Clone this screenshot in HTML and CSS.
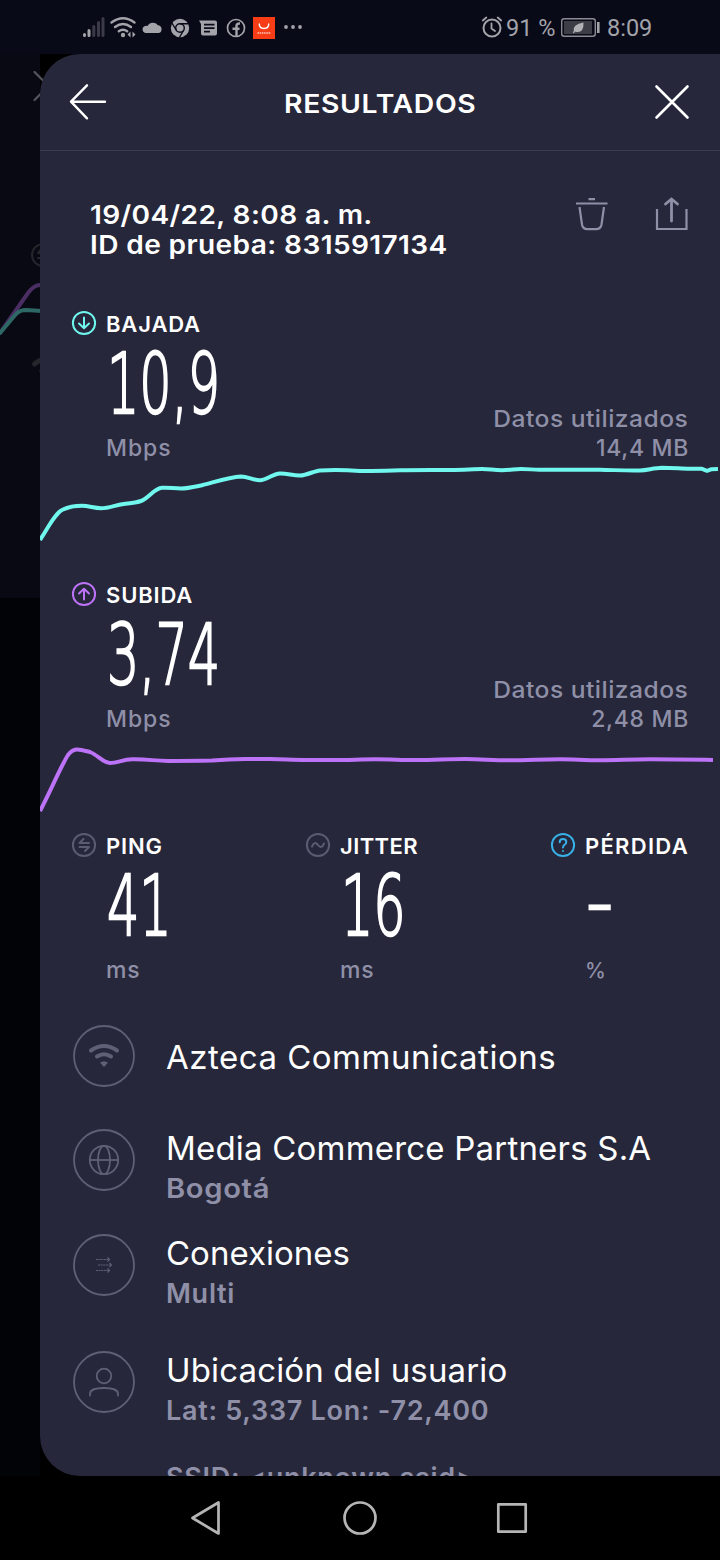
FILE: index.html
```html
<!DOCTYPE html>
<html lang="es">
<head>
<meta charset="utf-8">
<title>Resultados</title>
<link rel="stylesheet" href="styles.css">
</head>
<body>
<div class="screen">
  <header class="status">
    <svg class="status-icons" width="240" height="54" viewBox="70 0 240 54" fill="none">
      <g stroke-width="3" stroke-linecap="round">
        <path stroke="#a3a3aa" d="M84.500 34.500v1M89 30.500v5"/>
        <path stroke="#3a3a48" d="M93.800 26.500v9M98.500 22.500v13M103 18.500v17"/>
      </g>
      <g stroke="#a3a3aa" stroke-width="2.400" stroke-linecap="round">
        <path d="M111.500 22.500q11.500-8.500 23 0M115 27q8-6 16 0M118.800 31.200q4.200-3 8.400 0"/>
      </g>
      <circle cx="123" cy="35" r="2.200" fill="#a3a3aa"/>
      <path fill="#a3a3aa" d="M127.500 34.500l3-3v6zM135.500 34.500l-3-3v6z"/>
      <path fill="#a3a3aa" d="M145.500 33a3.600 3.600 0 0 1-.3-7q1.500-.3 2.300 0a6 6 0 0 1 10.300-.8 4 4 0 0 1 1 7.800z"/>
      <circle cx="180" cy="28" r="9.200" fill="#a3a3aa"/>
      <circle cx="180" cy="28" r="4.300" fill="#a3a3aa" stroke="#090a18" stroke-width="1.400"/>
      <path stroke="#090a18" stroke-width="1.400" d="M180 23.700h8.500M176.200 30l-4.600-7.500M183.800 30l-4.400 7.500"/>
      <path fill="#a3a3aa" d="M199 20.500h16q2 0 2 2v11q0 2-2 2h-12q-2 0-2-2V24z"/>
      <path stroke="#090a18" stroke-width="1.700" d="M204 24.700h10.500M204 28.200h10.500M204 31.700h6"/>
      <circle cx="236" cy="28" r="8.500" stroke="#a3a3aa" stroke-width="1.700"/>
      <path stroke="#a3a3aa" stroke-width="2.400" d="M236.500 36.500V26q0-2.800 3.500-2.500M232.500 28.700h7"/>
      <rect x="253" y="17" width="22" height="22" fill="#f83c16"/>
      <path stroke="#fff" stroke-width="1.400" stroke-linecap="round" d="M259.300 24q0 4.500 4.700 4.500t4.700-4.500"/>
      <path stroke="#ffc8b8" stroke-width="1.600" stroke-dasharray="1.500 .7" d="M257.500 33h13.500"/>
      <g fill="#a3a3aa"><circle cx="286" cy="27" r="1.900"/><circle cx="293" cy="27" r="1.900"/><circle cx="300" cy="27" r="1.900"/></g>
    </svg>
    <svg class="alarm" width="24" height="54" viewBox="480 0 24 54" fill="none" stroke="#a3a3aa" stroke-linecap="round">
      <circle cx="492" cy="28" r="8.500" stroke-width="2"/>
      <path stroke-width="1.800" d="M491.500 23.500v5l3.500 2.500M482.800 20.500l3.500-3M501.200 20.500l-3.500-3"/>
    </svg>
    <span class="percent">91 %</span>
    <svg class="battery" width="42" height="54" viewBox="560 0 42 54" fill="none">
      <rect x="561.700" y="18.700" width="33.600" height="17.600" rx="2.500" stroke="#8a8a92" stroke-width="1.400"/>
      <rect x="564" y="21" width="28" height="13" fill="#3d3d48"/>
      <path stroke="#a3a3aa" stroke-width="2.600" d="M598.300 22v11"/>
      <path fill="#b0b0b5" d="M573 33q.3-1.500.8-2.200-1.300-6.300 9.700-8.300.5 9.500-6 9.600-1.500 0-2.300-.5l-1.200 1.600z"/>
    </svg>
    <span class="clock">8:09</span>
  </header>

  <div class="stage">
    <svg class="behind" width="80" height="1422" viewBox="0 54 80 1422" fill="none">
      <g stroke-linecap="round">
        <path stroke="#55565b" stroke-width="2.200" d="M34.500 72l28 28M34.500 100l28-28"/>
        <circle cx="43" cy="255" r="11" stroke="#25262b" stroke-width="2"/>
        <path stroke="#25262b" stroke-width="2" d="M38 253h10M41 249l-3 4M38 258h10"/>
        <path stroke="#4a2e63" stroke-width="4" d="M0 333L28 293Q34 285 40 285"/>
        <path stroke="#2e6866" stroke-width="4" d="M0 333L16 314Q20 310 26 310L42 311"/>
        <path stroke="#25262b" stroke-width="5" d="M34.500 364q8-6.500 18-6.500M42 371q3-2 8-2"/>
      </g>
    </svg>
    <main class="panel">
      <div class="topbar">
        <svg width="40" height="40" viewBox="68 82 40 40" fill="none" stroke="#fff" stroke-width="2.400" stroke-linecap="round" stroke-linejoin="round"><path d="M105 101.700H71M87 85.300L71 101.700 87 118.300"/></svg>
        <h1 class="title">RESULTADOS</h1>
        <svg width="40" height="40" viewBox="652 82 40 40" fill="none" stroke="#fff" stroke-width="2.600" stroke-linecap="round"><path d="M656.500 86.500l31 31M687.500 86.500l-31 31"/></svg>
      </div>

      <section class="test">
        <div class="test-text"><div class="date">19/04/22, 8:08 a. m.</div><div class="test-id">ID de prueba: 8315917134</div></div>
        <svg width="116" height="38" viewBox="574 196 116 38" fill="none" stroke="#8f90a8" stroke-width="2.200">
          <path d="M576 203.500h31.500M588.500 199.200h6.500M579.500 207l2.500 17.500q.8 4.700 5.500 4.700h8.500q4.700 0 5.500-4.700L604 207"/>
          <path d="M657 209v20h29.500v-20"/><path stroke-width="2.800" stroke-linecap="round" d="M671.500 221V200M665.500 204l6-5 6 5"/>
        </svg>
      </section>

      <section class="speed">
        <div class="label-row">
          <svg width="26" height="26" viewBox="0 0 26 26" fill="none" stroke="#70f7ee" stroke-width="2" stroke-linecap="round" stroke-linejoin="round"><circle cx="13" cy="13" r="11.100"/><path d="M13 7.500v10.500M8 13.500l5 4.700 5-4.700"/></svg>
          <span class="label">BAJADA</span>
        </div>
        <div class="value"><span class="digits">10,9</span></div>
        <div class="meta"><span class="unit">Mbps</span><div class="used"><div class="used-label">Datos utilizados</div><div class="used-value">14,4 MB</div></div></div>
        <svg class="chart-down" width="680" height="118" viewBox="40 462 680 118" fill="none" stroke="#70f7ee" stroke-width="4" stroke-linejoin="round"><path d="M40 540C48 528 55 513 63 509.500C69 506.500 77 505.800 82 505.800C89 505.800 94 508.200 101 508.200C109 508.200 114 505.500 122 504.200C130 502.800 135 503.200 141 501C149 498 154 488.500 162 487.800C168 487.300 174 488.500 181 488.500C188 488.500 196 486.500 202 485.300C215 482 229 477 241 476.500C248 476.500 253 480.200 260 480.200C267 480.200 272 474 280 473.600C287 473.400 293 475.600 300 475.500C307 475.300 314 471 320 470.400C330 469.800 345 469.800 360 471C376 471.300 388 471 400 470.300C415 469.700 430 469.800 455 470C470 470 475 469 482 469C490 469 493 470.200 502 470.200C512 470 514 469 521 469C528 469 534 469.800 540 469.700L600 469.700C615 470 625 470.800 640 470.500C648 470 654 468 662 467.800C674 467.800 681 468.800 690 468.800H702L707 470.800L711 469.300L718 469"/></svg>
      </section>

      <section class="speed">
        <div class="label-row">
          <svg width="26" height="26" viewBox="0 0 26 26" fill="none" stroke="#bd73f7" stroke-width="2" stroke-linecap="round" stroke-linejoin="round"><circle cx="13" cy="13" r="11.100"/><path d="M13 18.500V8M8 12.500l5-4.700 5 4.700"/></svg>
          <span class="label">SUBIDA</span>
        </div>
        <div class="value"><span class="digits">3,74</span></div>
        <div class="meta"><span class="unit">Mbps</span><div class="used"><div class="used-label">Datos utilizados</div><div class="used-value">2,48 MB</div></div></div>
        <svg class="chart-up" width="680" height="98" viewBox="40 733 680 98" fill="none" stroke="#bd73f7" stroke-width="4"><path d="M40 811C50 792 62 764 68 755C74 747 79 749 90 752C98 755 103 763 110 763C117 763 123 759.500 132 759.300C147 759 154 760.800 168 761C185 761 200 760.800 212 760.600C226 759.500 230 759.200 245 759H270C285 759.200 292 760 307 760H335C350 760 360 759.300 375 759.300C392 759.300 400 760 417 760C435 760 447 759 465 759C480 759 493 760.300 508 760.300C530 760.300 540 759.200 560 759.200C575 759.200 583 760.200 600 760.200C618 760.200 630 759.200 650 759.200C675 759.200 692 759.600 713 760"/></svg>
      </section>

      <section class="stats">
        <div class="stat">
          <div class="label-row">
            <svg width="26" height="26" viewBox="0 0 26 26" fill="none" stroke="#5b5c72" stroke-width="2" stroke-linecap="round" stroke-linejoin="round"><circle cx="13" cy="13" r="11.100"/><path d="M18 11H8.500L12.500 7M8.500 15h9.500l-4 4"/></svg>
            <span class="label">PING</span>
          </div>
          <div class="value"><span class="digits">41</span></div>
          <div class="meta"><span class="unit">ms</span></div>
        </div>
        <div class="stat">
          <div class="label-row">
            <svg width="26" height="26" viewBox="0 0 26 26" fill="none" stroke="#5b5c72" stroke-width="2" stroke-linecap="round"><circle cx="13" cy="13" r="11.100"/><path d="M7 14.500Q9.500 8.500 13 13T19 11.500"/></svg>
            <span class="label short">JITTER</span>
          </div>
          <div class="value"><span class="digits">16</span></div>
          <div class="meta"><span class="unit">ms</span></div>
        </div>
        <div class="stat">
          <div class="label-row">
            <svg width="26" height="26" viewBox="0 0 26 26" fill="none" stroke="#37b1e8" stroke-width="2" stroke-linecap="round"><circle cx="13" cy="13" r="11.100"/><path d="M9.700 10.300Q9.700 7 13 7T16.300 10Q16.300 11.800 14.700 12.600T13 15.500M13 19v.1"/></svg>
            <span class="label wide">PÉRDIDA</span>
          </div>
          <div class="value"><span class="digits dash">-</span></div>
          <div class="meta"><span class="unit percent-unit">%</span></div>
        </div>
      </section>

      <section class="details">
        <div class="item provider">
          <svg class="badge" width="62" height="62" viewBox="0 0 62 62" fill="none" stroke="#5f6076"><circle cx="31" cy="31" r="30" stroke-width="1.800"/><g stroke-width="4" stroke-linecap="round"><path d="M18 25.500q13-9 26 0M24 31.500q7-4.500 14 0"/></g><path fill="#5f6076" stroke="none" d="M31 42l-4-4.300q4-3 8 0z"/></svg>
          <div class="item-text"><div class="name isp">Azteca Communications</div></div>
        </div>
        <div class="item server">
          <svg class="badge" width="62" height="62" viewBox="0 0 62 62" fill="none" stroke="#5f6076" stroke-width="1.800"><circle cx="31" cy="31" r="30"/><circle cx="31" cy="31" r="14.200"/><ellipse cx="31" cy="31" rx="6" ry="14.200"/><path d="M17 31h28"/></svg>
          <div class="item-text"><div class="name host">Media Commerce Partners S.A</div><div class="sub city">Bogotá</div></div>
        </div>
        <div class="item links">
          <svg class="badge" width="62" height="62" viewBox="0 0 62 62" fill="none" stroke="#5f6076"><circle cx="31" cy="31" r="30" stroke-width="1.800"/><g stroke-width="1.200"><path stroke-dasharray="2 .6" d="M23 25.500h13M25 31h13M23 36.500h13"/><path d="M34.500 23.500l2 2-2 2M36.500 29l2 2-2 2M34.500 34.500l2 2-2 2"/></g></svg>
          <div class="item-text"><div class="name">Conexiones</div><div class="sub">Multi</div></div>
        </div>
        <div class="item user">
          <svg class="badge" width="62" height="62" viewBox="0 0 62 62" fill="none" stroke="#5f6076" stroke-width="1.800"><circle cx="31" cy="31" r="30"/><circle cx="31" cy="25" r="7.300"/><path stroke-linecap="round" d="M17 44.500v-2Q17.500 37 31 37t14 5.500v2"/></svg>
          <div class="item-text"><div class="name place">Ubicación del usuario</div><div class="sub">Lat: 5,337 Lon: -72,400</div><div class="sub ssid">SSID: &lt;unknown ssid&gt;</div></div>
        </div>
      </section>
    </main>
  </div>

  <nav class="navbar">
    <svg width="340" height="40" viewBox="190 1498 340 40" fill="none" stroke="#b5b5b5" stroke-width="2.700" stroke-linejoin="round"><path d="M192.500 1518L218.500 1502.500V1533.500Z"/><circle cx="360" cy="1518" r="15.500"/><rect x="498.300" y="1504.300" width="27.400" height="27.400"/></svg>
  </nav>
</div>
</body>
</html>
```
FILE: styles.css
```css
* { box-sizing: border-box; }
body { margin: 0; background: #000; font-family: Inter, "Open Sans", sans-serif; }
svg { display: block; flex: none; }
.screen { width: 720px; height: 1560px; display: flex; flex-direction: column; overflow: hidden; }

.status { height: 54px; background: #090a18; display: flex; align-items: center; padding-left: 70px; color: #a3a3aa; font: 23.500px/54px Roboto, sans-serif; white-space: nowrap; }
.status span { padding-top: 2px; }
.alarm { margin-left: 170px; }
.percent { width: 56px; padding-left: 2px; }
.clock { margin-left: 5px; }

.stage { position: relative; height: 1422px; padding-left: 40px; background: linear-gradient(#080912 0 544px, #020307 544px); background-size: 40px 1422px; background-repeat: no-repeat; }
.behind { position: absolute; left: 0; top: 0; }
.panel { position: relative; width: 680px; height: 1422px; overflow: hidden; background: #26273a; border-radius: 40px 0 0 40px; color: #fff; white-space: nowrap; }

.topbar { height: 97px; border-bottom: 1px solid #3b3c4f; display: flex; align-items: center; justify-content: space-between; padding: 0 28px; }
.title { margin: 3px 0 0; font-size: 26px; font-weight: 600; line-height: 30px; letter-spacing: .600px; transform: scaleX(1.09); }

.test { display: flex; justify-content: space-between; padding: 48px 30px 50px 50px; height: 158px; }
.test-text { padding-top: 1px; font-size: 26px; line-height: 30px; font-weight: 600; letter-spacing: .350px; transform: scaleX(1.08); transform-origin: left; }
.test svg { margin-top: -3px; }

.label-row { height: 30px; display: flex; align-items: center; padding-left: 31px; gap: 9px; }
.label-row svg { margin-top: -2px; }
.label { font-size: 22px; font-weight: 600; line-height: 30px; letter-spacing: .850px; }
.label.short { letter-spacing: .400px; }
.label.wide { letter-spacing: 1.300px; }
.value { height: 88px; padding-left: 66px; line-height: 88px; }
.digits { display: inline-block; font-family: "DejaVu Sans", sans-serif; font-weight: 200; font-size: 84px; line-height: 88px; transform: translate(1px, 1px) scaleX(.605); transform-origin: left; -webkit-text-stroke: 2.500px #fff; }
.dash { transform: translate(1px, -4px) scaleX(.9); }
.meta { display: flex; justify-content: space-between; align-items: flex-end; height: 35px; padding: 0 32px 0 66px; color: #8f90a8; font-size: 23px; line-height: 29px; font-weight: 500; }
.unit { height: 28px; letter-spacing: .900px; }
.percent-unit { font-size: 21px; }
.used { height: 57px; text-align: right; }
.used-label { letter-spacing: .450px; transform: scaleX(1.07); transform-origin: right; }
.used-value { letter-spacing: .700px; margin-right: -1px; }

.stats { display: grid; grid-template-columns: 234px 245px 1fr; height: 194px; }

.item { display: flex; padding-left: 33px; gap: 31px; }
.name { font-size: 33px; line-height: 40px; }
.isp { letter-spacing: .500px; }
.host { letter-spacing: .200px; }
.place { letter-spacing: .150px; }
.sub { padding-top: 1px; font-size: 27px; line-height: 39px; font-weight: 600; color: #8f90a8; letter-spacing: .720px; }
.city { letter-spacing: .600px; transform: scaleX(1.08); transform-origin: left; }
.provider { height: 103px; }
.provider .item-text { padding-top: 12px; }
.server { height: 105px; }
.server .item-text { width: 490px; }
.links { height: 117px; }
.server .badge, .links .badge, .user .badge { margin-top: 1px; }
.ssid { margin-top: 27px; }

.navbar { height: 84px; padding: 22px 0 0 190px; background: #000; }
```
